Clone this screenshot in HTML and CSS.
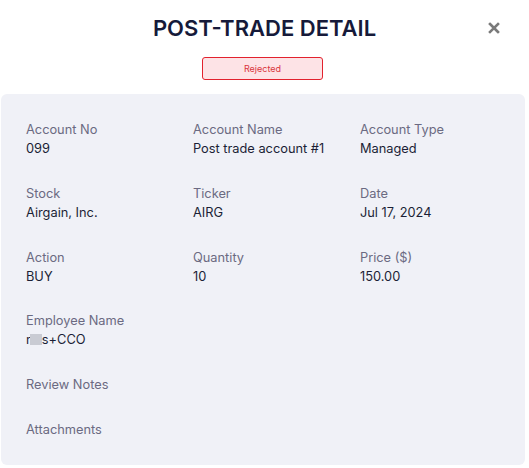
FILE: index.html
```html
<!DOCTYPE html>
<html lang="en">
<head>
<meta charset="utf-8">
<title>Post-Trade Detail</title>
<link rel="stylesheet" href="styles.css">
</head>
<body>
<div class="modal">
  <header class="header">
    <span></span>
    <h1 class="title">POST-TRADE DETAIL</h1>
    <button class="close" aria-label="Close">
      <svg width="12" height="12" viewBox="0 0 12 12"><path d="M2 2 L10 10 M10 2 L2 10" stroke="#7a7a7a" stroke-width="2.6" stroke-linecap="square"/></svg>
    </button>
  </header>
  <div class="status-row"><span class="badge">Rejected</span></div>
  <section class="panel">
    <div class="grid">
      <div class="field"><div class="label">Account No</div><div class="value">099</div></div>
      <div class="field"><div class="label">Account Name</div><div class="value">Post trade account #1</div></div>
      <div class="field"><div class="label">Account Type</div><div class="value">Managed</div></div>
      <div class="field"><div class="label">Stock</div><div class="value">Airgain, Inc.</div></div>
      <div class="field"><div class="label">Ticker</div><div class="value">AIRG</div></div>
      <div class="field"><div class="label">Date</div><div class="value">Jul 17, 2024</div></div>
      <div class="field"><div class="label">Action</div><div class="value">BUY</div></div>
      <div class="field"><div class="label">Quantity</div><div class="value">10</div></div>
      <div class="field"><div class="label">Price ($)</div><div class="value">150.00</div></div>
    </div>
    <div class="stack">
      <div class="field"><div class="label">Employee Name</div><div class="value">r<span class="blur"></span>s+CCO</div></div>
      <div class="field"><div class="label">Review Notes</div></div>
      <div class="field"><div class="label">Attachments</div></div>
    </div>
  </section>
</div>
</body>
</html>
```

FILE: styles.css
```css
* { box-sizing: border-box; }
html, body { margin: 0; padding: 0; background: #ffffff; }
body { font-family: Inter, "Noto Sans", sans-serif; width: 529px; }
.modal { width: 529px; }
.header {
  display: grid;
  grid-template-columns: 1fr auto 1fr;
  align-items: center;
  padding-top: 14px;
  height: 42px;
}
.title {
  margin: 0;
  font-size: 22px;
  line-height: 28px;
  font-weight: 600;
  color: #161a3a;
  letter-spacing: 0;
}
.close {
  justify-self: end;
  margin-right: 29px;
  background: none;
  border: 0;
  padding: 0;
  width: 12px;
  height: 12px;
  display: flex;
  cursor: pointer;
}
.status-row {
  display: flex;
  justify-content: center;
  padding-top: 15px;
  padding-right: 4px;
}
.badge {
  width: 121px;
  height: 23px;
  border: 1px solid #e2222e;
  border-radius: 3px;
  background: #fde3e6;
  color: #d9343c;
  font-size: 9px;
  display: flex;
  align-items: center;
  justify-content: center;
}
.panel {
  margin: 14px 4px 0 1px;
  background: #f0f1f7;
  border-radius: 6px;
  padding: 26px 24px 26px 25px;
  height: 371px;
}
.grid {
  display: grid;
  grid-template-columns: 167px 167px 1fr;
  row-gap: 26px;
}
.stack {
  display: flex;
  flex-direction: column;
  gap: 26px;
  margin-top: 25px;
}
.label {
  font-size: 12.8px;
  line-height: 19px;
  color: #6b6a82;
}
.value {
  font-size: 12.8px;
  line-height: 19px;
  color: #1b1f36;
  display: flex;
  align-items: center;
}
.blur {
  display: inline-block;
  width: 12px;
  height: 11px;
  background: #c9cbd3;
  margin: 0 0 0 -1px;
}
```
